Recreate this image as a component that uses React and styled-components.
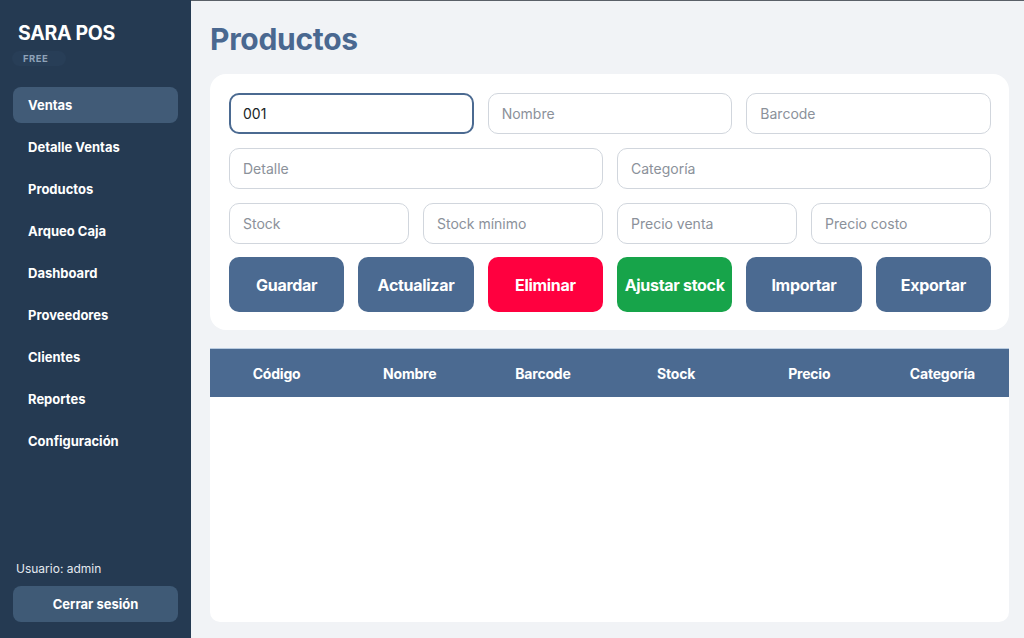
import React from 'react'
import styled, { createGlobalStyle } from 'styled-components'

const GlobalStyle = createGlobalStyle`
    html, body {
        margin: 0;
        padding: 0;
        height: 100%;
    }
    body {
        font-family: Inter, "Noto Sans", sans-serif;
        background: #f1f3f6;
    }
    #root {
        height: 100%;
    }
`

const Layout = styled.div`
    display: flex;
    height: 638px;
    width: 1024px;
    overflow: hidden;
`

const Sidebar = styled.aside`
    width: 191px;
    flex-shrink: 0;
    background: #253a52;
    display: flex;
    flex-direction: column;
    padding: 22px 13px 16px 13px;
    box-sizing: border-box;
    color: #fff;
`

const Brand = styled.div`
    font-size: 19.5px;
    font-weight: 700;
    letter-spacing: -0.3px;
    padding-left: 5px;
    line-height: 22px;
`

const Badge = styled.span`
    align-self: flex-start;
    margin: 7px 0 0 -1px;
    padding: 2px 18px 2px 11px;
    font-size: 9.5px;
    font-weight: 700;
    letter-spacing: 0.5px;
    color: #8ea2b8;
    background: #283e57;
    border-radius: 8px;
`

const Nav = styled.nav`
    display: flex;
    flex-direction: column;
    gap: 6px;
    margin-top: 21px;
`

const NavItem = styled.a`
    display: flex;
    align-items: center;
    height: 36px;
    padding-left: 15px;
    border-radius: 8px;
    font-size: 13px;
    font-weight: 700;
    color: #fff;
    background: ${p => (p.$active ? '#415b77' : 'transparent')};
    cursor: pointer;
`

const SideFooter = styled.div`
    margin-top: auto;
    display: flex;
    flex-direction: column;
    gap: 10px;
`

const User = styled.div`
    font-size: 12px;
    color: #e4e9ef;
    padding-left: 3px;
`

const Logout = styled.button`
    height: 36px;
    border: none;
    border-radius: 8px;
    background: #3f5a76;
    color: #fff;
    font-family: inherit;
    font-size: 13px;
    font-weight: 700;
    cursor: pointer;
`

const Main = styled.main`
    flex: 1;
    display: flex;
    flex-direction: column;
    padding: 20px 15px 16px 19px;
    box-sizing: border-box;
    border-top: 1px solid #5a6068;
    min-width: 0;
`

const Title = styled.h1`
    margin: 0 0 17px 0;
    font-size: 30px;
    font-weight: 700;
    color: #4a6890;
    letter-spacing: -0.3px;
    line-height: 36px;
`

const Card = styled.section`
    background: #fff;
    border-radius: 16px;
    padding: 19px 18px 18px 19px;
    display: grid;
    grid-template-columns: repeat(12, 1fr);
    column-gap: 14px;
    row-gap: 14px;
`

const Input = styled.input`
    grid-column: span ${p => p.$span};
    height: 41px;
    box-sizing: border-box;
    border: 1px solid #d1d6dd;
    border-radius: 10px;
    padding: 0 13px;
    font-family: inherit;
    font-size: 14px;
    color: #1a1f26;
    background: #fff;
    outline: none;
    min-width: 0;

    &::placeholder {
        color: #8b919a;
    }

    &.focused {
        border: 2px solid #4b6a91;
        padding: 0 12px;
    }
`

const Button = styled.button`
    grid-column: span 2;
    height: 55px;
    margin-top: -1px;
    border: none;
    border-radius: 10px;
    background: ${p => p.$bg || '#4b6a91'};
    color: #fff;
    font-family: inherit;
    font-size: 16px;
    font-weight: 700;
    letter-spacing: -0.3px;
    cursor: pointer;
    white-space: nowrap;
    padding: 0;
`

const Table = styled.div`
    margin-top: 18px;
    flex: 1;
    background: #fff;
    display: flex;
    flex-direction: column;
    border-radius: 0 0 10px 10px;
    overflow: hidden;
`

const HeadRow = styled.div`
    display: grid;
    grid-template-columns: repeat(6, 1fr);
    height: 48px;
    align-items: center;
    background: #4b6a91;
    border-top: 1px solid #b9cbe0;
`

const HeadCell = styled.div`
    text-align: center;
    color: #fff;
    font-size: 14px;
    font-weight: 700;
    letter-spacing: -0.2px;
`

const navItems = [
    'Ventas',
    'Detalle Ventas',
    'Productos',
    'Arqueo Caja',
    'Dashboard',
    'Proveedores',
    'Clientes',
    'Reportes',
    'Configuración',
]

const columns = ['Código', 'Nombre', 'Barcode', 'Stock', 'Precio', 'Categoría']

const App = () => {
    return (
        <>
            <GlobalStyle />
            <Layout>
                <Sidebar>
                    <Brand>SARA POS</Brand>
                    <Badge>FREE</Badge>
                    <Nav>
                        {navItems.map((item, i) => (
                            <NavItem key={item} $active={i === 0}>{item}</NavItem>
                        ))}
                    </Nav>
                    <SideFooter>
                        <User>Usuario: admin</User>
                        <Logout>Cerrar sesión</Logout>
                    </SideFooter>
                </Sidebar>
                <Main>
                    <Title>Productos</Title>
                    <Card>
                        <Input $span={4} className="focused" defaultValue="001" />
                        <Input $span={4} placeholder="Nombre" />
                        <Input $span={4} placeholder="Barcode" />
                        <Input $span={6} placeholder="Detalle" />
                        <Input $span={6} placeholder="Categoría" />
                        <Input $span={3} placeholder="Stock" />
                        <Input $span={3} placeholder="Stock mínimo" />
                        <Input $span={3} placeholder="Precio venta" />
                        <Input $span={3} placeholder="Precio costo" />
                        <Button>Guardar</Button>
                        <Button>Actualizar</Button>
                        <Button $bg="#ff003f">Eliminar</Button>
                        <Button $bg="#17a44a">Ajustar stock</Button>
                        <Button>Importar</Button>
                        <Button>Exportar</Button>
                    </Card>
                    <Table>
                        <HeadRow>
                            {columns.map(c => (
                                <HeadCell key={c}>{c}</HeadCell>
                            ))}
                        </HeadRow>
                    </Table>
                </Main>
            </Layout>
        </>
    )
}

export default App
